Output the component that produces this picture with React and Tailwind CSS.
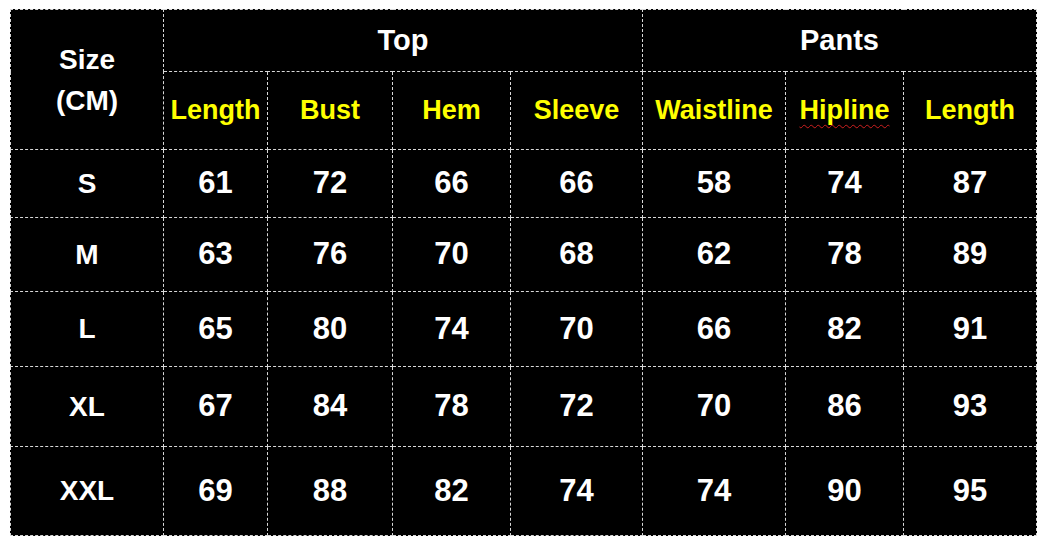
const rows = [
  ["S", 61, 72, 66, 66, 58, 74, 87],
  ["M", 63, 76, 70, 68, 62, 78, 89],
  ["L", 65, 80, 74, 70, 66, 82, 91],
  ["XL", 67, 84, 78, 72, 70, 86, 93],
  ["XXL", 69, 88, 82, 74, 74, 90, 95],
];

const rowHeights = ["h-[68px]", "h-[74px]", "h-[75px]", "h-[80px]", "h-[89px]"];

const cell = "border border-dashed border-[#d8d8d8] text-center align-middle p-0";

export default function App() {
  return (
    <div className="w-[1043px] h-[540px] bg-white pt-[9px] pl-[10px] font-['Liberation_Sans',Arial,sans-serif] font-bold">
      <table className="table-fixed border-collapse bg-black text-white w-[1026px]">
        <colgroup>
          <col className="w-[153px]" />
          <col className="w-[104px]" />
          <col className="w-[125px]" />
          <col className="w-[118px]" />
          <col className="w-[132px]" />
          <col className="w-[143px]" />
          <col className="w-[118px]" />
          <col className="w-[133px]" />
        </colgroup>
        <thead>
          <tr className="h-[62px]">
            <th rowSpan={2} className={`${cell} text-[28px] leading-[41px]`}>
              <div>Size</div>
              <div>(CM)</div>
            </th>
            <th colSpan={4} className={`${cell} text-[29px]`}>Top</th>
            <th colSpan={3} className={`${cell} text-[29px]`}>Pants</th>
          </tr>
          <tr className="h-[78px] text-[#ffff00] text-[27px]">
            <th className={cell}>Length</th>
            <th className={cell}>Bust</th>
            <th className={cell}>Hem</th>
            <th className={cell}>Sleeve</th>
            <th className={cell}>Waistline</th>
            <th className={cell}>
              <span className="underline decoration-wavy decoration-[#d02020] decoration-1 underline-offset-[5px]">Hipline</span>
            </th>
            <th className={cell}>Length</th>
          </tr>
        </thead>
        <tbody>
          {rows.map((r, i) => (
            <tr key={r[0]} className={rowHeights[i]}>
              <td className={`${cell} text-[28px]`}>{r[0]}</td>
              {r.slice(1).map((v, j) => (
                <td key={j} className={`${cell} text-[31px]`}>{v}</td>
              ))}
            </tr>
          ))}
        </tbody>
      </table>
    </div>
  );
}
